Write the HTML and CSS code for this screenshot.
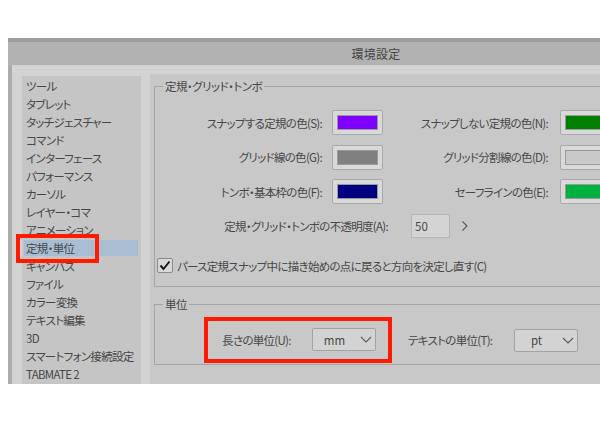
FILE: index.html
```html
<!DOCTYPE html>
<html lang="ja">
<head>
<meta charset="utf-8">
<title>環境設定</title>
<link rel="stylesheet" href="styles.css">
</head>
<body>
<div class="window">
  <div class="topstrip"></div>
  <div class="titlebar">環境設定</div>
  <div class="content">
    <ul class="sidebar">
      <li class="item">ツール</li>
      <li class="item">タブレット</li>
      <li class="item">タッチジェスチャー</li>
      <li class="item">コマンド</li>
      <li class="item">インターフェース</li>
      <li class="item">パフォーマンス</li>
      <li class="item">カーソル</li>
      <li class="item">レイヤー・コマ</li>
      <li class="item">アニメーション</li>
      <li class="item selected">定規・単位<span class="mark-side"></span></li>
      <li class="item">キャンバス</li>
      <li class="item">ファイル</li>
      <li class="item">カラー変換</li>
      <li class="item">テキスト編集</li>
      <li class="item">3D</li>
      <li class="item">スマートフォン接続設定</li>
      <li class="item">TABMATE 2</li>
    </ul>
    <div class="main">
      <fieldset class="group group-ruler">
        <legend>定規・グリッド・トンボ</legend>
        <div class="colors">
          <span class="label pad-l">スナップする定規の色(S):</span>
          <span class="swatch"><span class="chip c-purple"></span></span>
          <span class="label pad-r">スナップしない定規の色(N):</span>
          <span class="swatch"><span class="chip c-green"></span></span>
          <span class="label pad-l">グリッド線の色(G):</span>
          <span class="swatch"><span class="chip c-gray"></span></span>
          <span class="label pad-r">グリッド分割線の色(D):</span>
          <span class="swatch"><span class="chip c-light"></span></span>
          <span class="label pad-l">トンボ・基本枠の色(F):</span>
          <span class="swatch"><span class="chip c-navy"></span></span>
          <span class="label pad-r">セーフラインの色(E):</span>
          <span class="swatch"><span class="chip c-safe"></span></span>
        </div>
        <div class="opacity-row">
          <span class="opacity-label">定規・グリッド・トンボの不透明度(A):</span>
          <span class="numbox">50</span>
          <svg class="arrow" width="8" height="12" viewBox="0 0 8 12"><polyline points="1.5,1.5 6,6 1.5,10.5" fill="none" stroke="#5a5a5a" stroke-width="1.1"/></svg>
        </div>
        <div class="check-row">
          <span class="checkbox"><svg width="14" height="13" viewBox="0 0 14 13"><polyline points="2.5,6.5 5.5,10 11.5,2.5" fill="none" stroke="#1a1a1a" stroke-width="2"/></svg></span>
          <span class="check-label">パース定規スナップ中に描き始めの点に戻ると方向を決定し直す(C)</span>
        </div>
      </fieldset>
      <fieldset class="group group-unit">
        <legend>単位</legend>
        <div class="unit-row">
          <div class="mark-unit">
            <span class="unit-label w1">長さの単位(U):</span>
            <span class="select"><span class="sel-text">mm</span><svg class="chev" width="12" height="7" viewBox="0 0 12 7"><polyline points="1,1 6,6 11,1" fill="none" stroke="#5a5a5a" stroke-width="1.1"/></svg></span>
          </div>
          <span class="unit-label w2">テキストの単位(T):</span>
          <span class="select"><span class="sel-text">pt</span><svg class="chev" width="12" height="7" viewBox="0 0 12 7"><polyline points="1,1 6,6 11,1" fill="none" stroke="#5a5a5a" stroke-width="1.1"/></svg></span>
        </div>
      </fieldset>
    </div>
  </div>
</div>
</body>
</html>
```
FILE: styles.css
```css
html, body {
  margin: 0;
  padding: 0;
  background: #ffffff;
  overflow: hidden;
  width: 600px;
  height: 424px;
}
body {
  font-family: "Noto Sans CJK JP", "Noto Sans", sans-serif;
  font-feature-settings: "palt";
  font-size: 11.5px;
  color: #474747;
}
.window {
  margin: 38px 0 0 8px;
  width: 736px;
  display: flex;
  flex-direction: column;
}
.topstrip {
  height: 4px;
  background: #9d9d9d;
}
.titlebar {
  height: 23px;
  line-height: 23px;
  background: #b2b2b2;
  text-align: center;
  color: #444444;
  font-size: 12px;
  letter-spacing: 0.3px;
}
.content {
  height: 319px;
  background: #d3d3d3;
  border-left: 4px solid #acacac;
  display: flex;
  padding-top: 10px;
  box-sizing: border-box;
}
.sidebar {
  list-style: none;
  margin: 1px 0 0 10px;
  padding: 2px 0 0 0;
  width: 119px;
  background: #c5c5c5;
  flex: none;
}
.item {
  height: 16px;
  line-height: 16px;
  margin: 0 3px 2px 2px;
  padding-left: 2px;
  white-space: nowrap;
  letter-spacing: -0.7px;
}
.selected {
  background: #a9bdd2;
  position: relative;
}
.mark-side {
  position: absolute;
  left: -8px;
  top: -6px;
  width: 83px;
  height: 29px;
  border: 4px solid #ff1a00;
  box-sizing: border-box;
}
.main {
  margin-left: 9px;
  flex: 1;
  background: #c8c8c8;
  margin-top: -1px;
  padding: 5px 4px 0 4px;
}
.group {
  margin: 0;
  border: 1px solid #a5a5a5;
  padding: 0;
  min-width: 0;
}
.group legend {
  margin-left: 8px;
  padding: 0 2px;
  line-height: 14px;
  height: 14px;
  font-size: 11.5px;
  letter-spacing: -0.5px;
}
.group-ruler {
  padding: 17px 0 13px 0;
}
.colors {
  display: grid;
  grid-template-columns: 177px 51px 177px 51px;
  grid-auto-rows: 25px;
  row-gap: 9.5px;
  align-items: center;
}
.label {
  text-align: right;
  white-space: nowrap;
  letter-spacing: -0.7px;
}
.pad-l { padding-right: 10px; }
.pad-r { padding-right: 12px; }
.swatch {
  box-sizing: border-box;
  width: 51px;
  height: 25px;
  border: 1px solid #a9a9a9;
  border-radius: 2px;
  background: #d9d9d9;
  padding: 4px;
  display: flex;
}
.chip {
  flex: 1;
  border: 1px solid #9a9a9a;
}
.c-purple { background: #8000ff; }
.c-green { background: #008000; }
.c-gray { background: #808080; }
.c-light { background: #c9c9c9; }
.c-navy { background: #000080; }
.c-safe { background: #00b140; }
.opacity-row {
  margin-top: 10px;
  display: flex;
  align-items: center;
  height: 24px;
}
.opacity-label {
  width: 233px;
  text-align: right;
  white-space: nowrap;
  letter-spacing: -0.7px;
}
.numbox {
  margin-left: 23px;
  box-sizing: border-box;
  width: 39px;
  height: 24px;
  line-height: 22px;
  border: 1px solid #b4b4b4;
  background: #d4d4d4;
  padding-left: 3px;
}
.arrow {
  margin-left: 11px;
}
.check-row {
  margin-top: 20px;
  height: 15px;
  display: flex;
  align-items: center;
  padding-left: 2px;
}
.checkbox {
  box-sizing: border-box;
  width: 16px;
  height: 15px;
  border: 1px solid #8a8a8a;
  border-radius: 2px;
  background: #d8d8d8;
  display: flex;
  align-items: center;
  justify-content: center;
}
.check-label {
  margin-left: 4px;
  white-space: nowrap;
  letter-spacing: -0.7px;
}
.group-unit {
  margin-top: 10px;
  padding: 6px 0 1px 0;
}
.unit-row {
  display: flex;
  align-items: center;
}
.mark-unit {
  margin-left: 49px;
  border: 4px solid #ff1a00;
  padding: 7px 12px 8px 14px;
  display: flex;
  align-items: center;
}
.unit-label {
  white-space: nowrap;
  letter-spacing: -0.7px;
}
.w1 { width: 90px; }
.w2 { width: 106px; margin-left: 16px; }
.select {
  box-sizing: border-box;
  width: 64px;
  height: 23px;
  border: 1px solid #a3a3a3;
  border-radius: 2px;
  background: #d3d3d3;
  display: flex;
  align-items: center;
}
.sel-text {
  flex: 1;
  text-align: center;
  padding-right: 14px;
  padding-left: 10px;
}
.chev {
  margin-right: 3px;
  flex: none;
}
```
